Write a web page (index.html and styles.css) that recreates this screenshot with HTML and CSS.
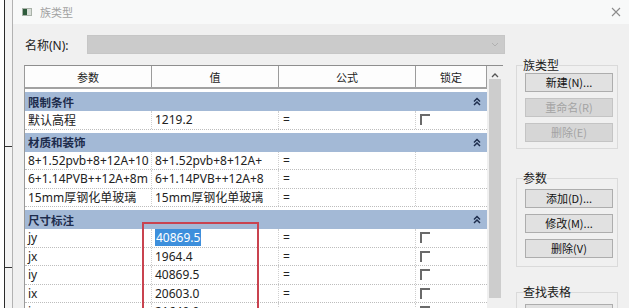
FILE: index.html
```html
<!DOCTYPE html>
<html lang="zh">
<head>
<meta charset="utf-8">
<title>族类型</title>
<link rel="stylesheet" href="styles.css">
</head>
<body>
<div class="screen">
  <div class="edge"><i class="tick t1"></i><i class="tick t2"></i></div>
  <div class="dialog">
    <div class="titlebar">
      <svg class="appicon" width="10" height="8" viewBox="0 0 10 8"><rect x="0.5" y="0.5" width="9" height="7" fill="#d9dfd9" stroke="#a9b2a9"/><rect x="1" y="1" width="4" height="6" fill="#2e5b3b"/></svg>
      <span class="title">族类型</span>
      <svg class="close" width="10" height="10" viewBox="0 0 10 10"><path d="M1 1L9 9M9 1L1 9" stroke="#8c8c8c" stroke-width="1.1" fill="none"/></svg>
    </div>

    <div class="namerow">
      <span class="namelabel">名称(N):</span>
      <div class="combo"><svg width="8" height="5" viewBox="0 0 8 5"><path d="M1 1L4 4L7 1" stroke="#b0b0b0" stroke-width="1" fill="none"/></svg></div>
    </div>

    <div class="main">
      <div class="frame">
        <div class="table">
          <div class="row head">
            <div class="hc">参数</div><div class="hc">值</div><div class="hc">公式</div><div class="hc">锁定</div>
          </div>

          <div class="section"><span>限制条件</span><svg class="chev" width="8" height="9" viewBox="0 0 8 9"><path d="M1 4.5L4 1.5L7 4.5M1 8L4 5L7 8" stroke="#1d2c4c" stroke-width="1.5" fill="none"/></svg></div>
          <div class="row">
            <div class="c">默认高程</div><div class="c">1219.2</div><div class="c">=</div><div class="c"><span class="check"></span></div>
          </div>

          <div class="section"><span>材质和装饰</span><svg class="chev" width="8" height="9" viewBox="0 0 8 9"><path d="M1 4.5L4 1.5L7 4.5M1 8L4 5L7 8" stroke="#1d2c4c" stroke-width="1.5" fill="none"/></svg></div>
          <div class="row">
            <div class="c">8+1.52pvb+8+12A+10</div><div class="c">8+1.52pvb+8+12A+</div><div class="c">=</div><div class="c"></div>
          </div>
          <div class="row">
            <div class="c">6+1.14PVB++12A+8m</div><div class="c">6+1.14PVB++12A+8</div><div class="c">=</div><div class="c"></div>
          </div>
          <div class="row">
            <div class="c">15mm厚钢化单玻璃</div><div class="c">15mm厚钢化单玻璃</div><div class="c">=</div><div class="c"></div>
          </div>

          <div class="section"><span>尺寸标注</span><svg class="chev" width="8" height="9" viewBox="0 0 8 9"><path d="M1 4.5L4 1.5L7 4.5M1 8L4 5L7 8" stroke="#1d2c4c" stroke-width="1.5" fill="none"/></svg></div>
          <div class="row">
            <div class="c">jy</div><div class="c"><span class="sel">40869.5</span></div><div class="c">=</div><div class="c"><span class="check"></span></div>
          </div>
          <div class="row">
            <div class="c">jx</div><div class="c">1964.4</div><div class="c">=</div><div class="c"><span class="check"></span></div>
          </div>
          <div class="row">
            <div class="c">iy</div><div class="c">40869.5</div><div class="c">=</div><div class="c"><span class="check"></span></div>
          </div>
          <div class="row">
            <div class="c">ix</div><div class="c">20603.0</div><div class="c">=</div><div class="c"><span class="check"></span></div>
          </div>
          <div class="row">
            <div class="c">iz</div><div class="c">21640.0</div><div class="c">=</div><div class="c"><span class="check"></span></div>
          </div>
        </div>
        <div class="scrollbar">
          <svg class="up" width="8" height="5" viewBox="0 0 8 5"><path d="M1 4L4 1L7 4" stroke="#555" stroke-width="1.3" fill="none"/></svg>
          <div class="thumb"></div>
        </div>
        <div class="redbox"></div>
      </div>

      <div class="side">
        <fieldset class="group g1">
          <legend>族类型</legend>
          <button class="btn">新建(N)...</button>
          <button class="btn" disabled>重命名(R)</button>
          <button class="btn" disabled>删除(E)</button>
        </fieldset>
        <fieldset class="group g2">
          <legend>参数</legend>
          <button class="btn">添加(D)...</button>
          <button class="btn">修改(M)...</button>
          <button class="btn">删除(V)</button>
        </fieldset>
        <fieldset class="group g3">
          <legend>查找表格</legend>
          <button class="btn">管理(G)...</button>
        </fieldset>
      </div>
    </div>
  </div>
</div>
</body>
</html>
```

FILE: styles.css
```css
* { box-sizing: border-box; }

body {
  margin: 0;
  width: 629px;
  height: 308px;
  overflow: hidden;
  background: #ffffff;
  font-family: "Noto Sans", "Noto Sans CJK SC", sans-serif;
  font-size: 12px;
  color: #1e1e1e;
}

.screen {
  display: flex;
  height: 308px;
}

.edge {
  position: relative;
  flex: none;
  width: 8px;
  margin-left: 4px;
  border-left: 1px solid #2b2b2b;
  background: #f4f4f4;
}

.tick {
  position: absolute;
  left: 0;
  width: 7px;
  height: 1px;
  background: #333;
}
.t1 { top: 146px; }
.t2 { top: 267px; }

.dialog {
  flex: 1;
  min-width: 0;
  border-left: 1px solid #b2b2b2;
  background: #f0f0f0;
}

/* title bar */
.titlebar {
  display: flex;
  align-items: center;
  height: 24px;
  padding-left: 9px;
  background: #f8f9f9;
}
.appicon { flex: none; }
.title {
  margin-left: 8px;
  font-size: 11px;
  color: #a2a2a2;
  font-family: "Noto Sans CJK SC", sans-serif;
}
.close {
  margin-left: auto;
  margin-right: 8px;
}

/* name row */
.namerow {
  display: flex;
  align-items: center;
  padding: 11px 0 0 12px;
}
.namelabel {
  width: 62px;
  font-size: 12px;
  color: #222;
}
.combo {
  display: flex;
  align-items: center;
  justify-content: flex-end;
  width: 418px;
  height: 19px;
  padding-right: 5px;
  background: #cbcbcb;
  border: 1px solid #c6c6c6;
}

/* main */
.main {
  display: flex;
  align-items: flex-start;
  margin-top: 3px;
  padding-left: 11px;
}

.frame {
  position: relative;
  display: flex;
  flex: none;
  width: 479px;
  height: 260px;
  margin-top: 8px;
  border-top: 1px solid #8e8e8e;
  border-left: 1px solid #9a9a9a;
  background: #ffffff;
}

.table {
  width: 462px;
  flex: none;
}

.row {
  display: grid;
  grid-template-columns: 127px 127px 137px 71px;
  height: 18.5px;
  border-bottom: 1px dotted #bdbdbd;
}

.c {
  display: flex;
  align-items: center;
  padding-left: 3px;
  white-space: nowrap;
  overflow: hidden;
  border-right: 1px dotted #cfcfcf;
  font-size: 12px;
  color: #222;
}
.c:nth-child(3) { padding-left: 4px; }
.c:nth-child(4) { padding-left: 4px; border-right: none; }

.row.head {
  height: 23px;
  border-bottom: 2px solid #a2a2a2;
  background: #fdfdfd;
}
.hc {
  display: flex;
  align-items: center;
  justify-content: center;
  border-right: 1px solid #9c9c9c;
  font-size: 11px;
  color: #222;
  font-family: "Noto Sans CJK SC", sans-serif;
}

.section {
  display: flex;
  align-items: center;
  justify-content: space-between;
  height: 19px;
  margin-top: 3px;
  padding: 0 6px 0 3px;
  background: #a3b9d6;
  color: #1d2c4c;
  font-weight: 700;
  font-size: 11.5px;
  font-family: "Noto Sans CJK SC", sans-serif;
}

.check {
  display: block;
  width: 10px;
  height: 11px;
  border-top: 2px solid #6a6a6a;
  border-left: 2px solid #6a6a6a;
  background: #ffffff;
}

.sel {
  background: #3d8fdc;
  color: #ffffff;
  padding: 0 1px;
}

.scrollbar {
  display: flex;
  flex-direction: column;
  align-items: center;
  width: 16px;
  flex: none;
  background: #f0f0f0;
}
.up { margin-top: 7px; }
.thumb {
  width: 12px;
  height: 219px;
  margin-top: 1px;
  background: #cdcdcd;
}

.redbox {
  position: absolute;
  left: 117px;
  top: 156px;
  width: 117px;
  height: 200px;
  border: 2px solid #c9434f;
}

/* side panel */
.side {
  flex: none;
  width: 102px;
  margin-left: 13px;
}

.group {
  width: 102px;
  min-width: 0;
  margin: 0;
  padding: 0 4px 6px 8px;
  border: 1px solid #dadada;
}
.group legend {
  margin-left: -2px;
  padding: 0;
  height: 16px;
  line-height: 16px;
  font-size: 12px;
  color: #1a1a1a;
  font-family: "Noto Sans CJK SC", sans-serif;
}
.g2 { margin-top: 21px; padding-top: 3px; padding-bottom: 8px; }
.g3 { margin-top: 17px; padding-top: 4px; }

.btn {
  display: block;
  width: 88px;
  height: 19px;
  margin: 0 0 6px 0;
  padding: 0;
  border: 1px solid #adadad;
  background: #e1e1e1;
  font-family: "Noto Sans CJK SC", sans-serif;
  font-size: 11px;
  color: #111;
  line-height: 17px;
  text-align: center;
}
.btn:last-child { margin-bottom: 0; }
.btn:disabled {
  background: #d6d6d6;
  border-color: #c4c4c4;
  color: #a3a3a3;
}
```
